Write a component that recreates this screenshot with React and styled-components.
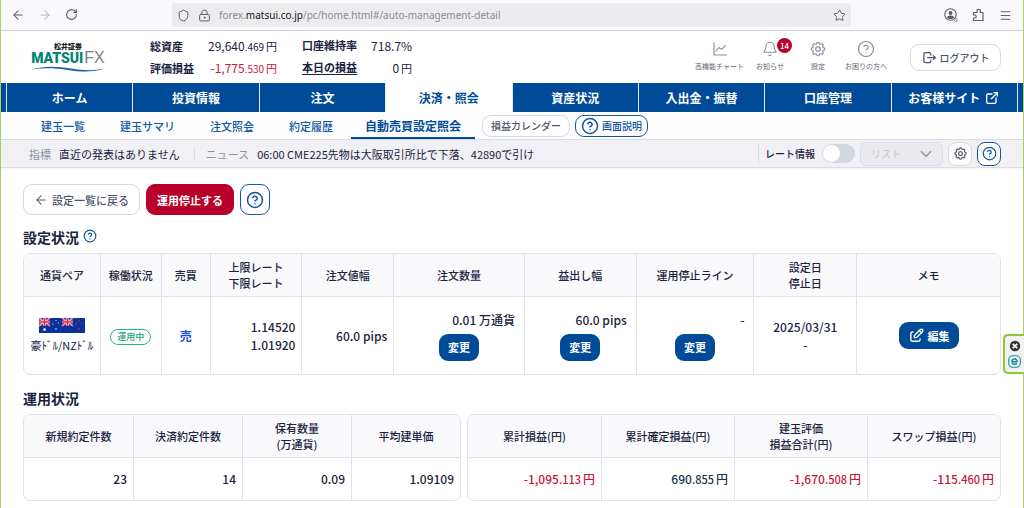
import React, {useState} from 'react';
import styled, {createGlobalStyle} from 'styled-components';
import {
  ArrowLeft,
  ArrowRight,
  Bell,
  ChevronDown,
  CircleQuestionMark,
  LockKeyhole,
  Menu,
  RotateCw,
  Shield,
  Star,
} from 'lucide-react';
import {TbEdit, TbExternalLink, TbLogout, TbSettings} from 'react-icons/tb';

const navItems = ['ホーム', '投資情報', '注文', '決済・照会', '資産状況', '入出金・振替', '口座管理', 'お客様サイト'];
const subItems = ['建玉一覧', '建玉サマリ', '注文照会', '約定履歴', '自動売買設定照会'];

const Yen = ({whole, decimal, tone, small}) => (
  <Money $tone={tone}>
    {whole}
    {decimal && <Decimal $small={small}>.{decimal}</Decimal>}
    <Unit $small={small}>円</Unit>
  </Money>
);

const ChartIcon = () => (
  <svg width="14" height="14" viewBox="0 0 14 14" fill="none" stroke="currentColor" strokeWidth="1.1">
    <path d="M1 0.5v12.500h13" />
    <path d="M2.500 9.500l2.500-3c1-1.200 1.600-.6 2.400.2s1.600.8 2.400-.3l2.700-3" />
  </svg>
);

const PuzzleIcon = () => (
  <svg width="13" height="14" viewBox="0 0 13 14" fill="none" stroke="currentColor" strokeWidth="1.2" strokeLinejoin="round">
    <path d="M1.500 4.500h3.500V3a1.700 1.700 0 0 1 3.400 0v1.500h2.600v8H1.500v-2.500h1.200a1.500 1.500 0 0 0 0-3H1.500z" />
  </svg>
);

const AccountIcon = () => (
  <svg width="14" height="14" viewBox="0 0 14 14" fill="none" stroke="currentColor">
    <circle cx="6.500" cy="6.500" r="5.700" strokeWidth="1.1" />
    <circle cx="6.500" cy="5" r="1.900" fill="currentColor" stroke="none" />
    <path d="M3 9.800c0-3 7-3 7 0-1.800 1.600-5.200 1.600-7 0z" fill="currentColor" stroke="none" />
    <circle cx="11.800" cy="11.800" r="1.600" fill="#f9f9fb" strokeWidth="0.6" />
  </svg>
);

const UnionJack = ({x}) => (
  <g transform={`translate(${x} 0)`}>
    <path d="M0 0l11 8M11 0L0 8" stroke="#fff" strokeWidth="1.500" />
    <path d="M0 0l11 8M11 0L0 8" stroke="#f0304a" strokeWidth="0.8" />
    <path d="M5.500 0v8M0 4h11" stroke="#fff" strokeWidth="2.600" />
    <path d="M5.500 0v8M0 4h11" stroke="#f0203c" strokeWidth="1.600" />
  </g>
);

const Flags = () => (
  <svg width="46" height="15" viewBox="0 0 46 15">
    <rect width="46" height="15" fill="#0a329b" />
    <UnionJack x={0} />
    <UnionJack x={23} />
    <g fill="#fff">
      <circle cx="5.500" cy="11.500" r="1.300" />
      <circle cx="17" cy="2.500" r="0.600" />
      <circle cx="14" cy="6" r="0.600" />
      <circle cx="19.500" cy="5" r="0.600" />
      <circle cx="17" cy="11" r="0.700" />
    </g>
    <g fill="#b52d58">
      <circle cx="40" cy="3" r="0.800" />
      <circle cx="37" cy="6" r="0.800" />
      <circle cx="43" cy="5.500" r="0.800" />
      <circle cx="40" cy="11" r="0.900" />
    </g>
  </svg>
);

const App = () => {
  const [rate, setRate] = useState(false);
  return (
    <Window>
      <GlobalStyle />
      <Browser>
        <BrowserButtons>
          <PlainButton aria-label="戻る"><ArrowLeft size={14} strokeWidth={1.800} /></PlainButton>
          <PlainButton aria-label="進む" disabled><ArrowRight size={14} strokeWidth={1.800} /></PlainButton>
          <PlainButton aria-label="再読み込み"><RotateCw size={13} strokeWidth={2} /></PlainButton>
        </BrowserButtons>
        <Address>
          <Shield size={13} strokeWidth={1.800} />
          <LockKeyhole size={13} strokeWidth={1.800} />
          <Url>forex.<b>matsui.co.jp</b>/pc/home.html#/auto-management-detail</Url>
          <Star size={13} strokeWidth={1.800} />
        </Address>
        <BrowserTools>
          <PlainButton aria-label="アカウント"><AccountIcon /></PlainButton>
          <PlainButton aria-label="拡張機能"><PuzzleIcon /></PlainButton>
          <PlainButton aria-label="メニュー"><Menu size={13} strokeWidth={1.800} /></PlainButton>
        </BrowserTools>
      </Browser>

      <Header>
        <Logo>
          <LogoCompany>松井証券</LogoCompany>
          <LogoName>MATSUI<LogoFx>FX</LogoFx></LogoName>
          <svg width="74" height="6" viewBox="0 0 74 6">
            <path d="M0 3.500C14-.5 26 .5 40 2.600s24 2 34-.1C62 6.500 50 6 37 3.900S12 1.500 0 3.500z" fill="#1f62ab" />
          </svg>
        </Logo>
        <Stats>
          <Stat>
            <StatLabel>総資産</StatLabel>
            <StatValue><Yen small whole="29,640" decimal="469" /></StatValue>
            <StatLabel>評価損益</StatLabel>
            <StatValue><Yen small whole="-1,775" decimal="530" tone="#c8143c" /></StatValue>
          </Stat>
          <Stat>
            <StatLabel>口座維持率</StatLabel>
            <StatValue>718.7%</StatValue>
            <StatLabel><StatLink href="#profit">本日の損益</StatLink></StatLabel>
            <StatValue><Yen small whole="0" /></StatValue>
          </Stat>
        </Stats>
        <Tools>
          <Tool><ChartIcon />高機能チャート</Tool>
          <Tool>
            <Bell size={16} strokeWidth={1.600} />
            お知らせ
            <Badge>14</Badge>
          </Tool>
          <Tool><TbSettings size={18} strokeWidth={1.500} />設定</Tool>
          <Tool><CircleQuestionMark size={18} strokeWidth={1.600} />お困りの方へ</Tool>
        </Tools>
        <Logout><TbLogout size={15} />ログアウト</Logout>
      </Header>

      <Nav>
        <NavEdge />
        {navItems.map((name, i) => (
          <NavLink key={name} href="#nav" $active={i === 3}>
            {name}
            {i === 7 && <TbExternalLink size={16} />}
          </NavLink>
        ))}
        <NavEdge />
      </Nav>

      <SubNav>
        {subItems.map((name, i) => (
          <SubLink key={name} href="#sub" $active={i === 4}>{name}</SubLink>
        ))}
        <PillGroup>
          <Pill>損益カレンダー</Pill>
          <Pill $blue><CircleQuestionMark size={18} />画面説明</Pill>
        </PillGroup>
      </SubNav>

      <Ticker>
        <TickerLabel>指標</TickerLabel>
        <TickerText>直近の発表はありません</TickerText>
        <TickerNews>
          <TickerLabel>ニュース</TickerLabel>
          <TickerText>06:00 CME225先物は大阪取引所比で下落、42890で引け</TickerText>
        </TickerNews>
        <RateLabel>
          レート情報
          <Switch type="checkbox" checked={rate} onChange={() => setRate(!rate)} />
        </RateLabel>
        <SelectBox>
          <Select disabled aria-label="表示形式">
            <option>リスト</option>
          </Select>
          <ChevronDown size={18} />
        </SelectBox>
        <RoundButton aria-label="レート設定"><TbSettings size={15} /></RoundButton>
        <RoundButton aria-label="ヘルプ" $blue><CircleQuestionMark size={15} /></RoundButton>
      </Ticker>

      <Main>
        <Actions>
          <Button><ArrowLeft size={14} strokeWidth={1.800} />設定一覧に戻る</Button>
          <Button $kind="stop">運用停止する</Button>
          <Button $kind="help" aria-label="ヘルプ"><CircleQuestionMark size={18} /></Button>
        </Actions>

        <Title>設定状況<TitleHelp><CircleQuestionMark size={14} /></TitleHelp></Title>
        <Table>
          <colgroup>
            {[76, 61, 49, 92, 92, 131, 112, 118, 103, 144].map((w, i) => (
              <Col key={i} $share={w / 978} />
            ))}
          </colgroup>
          <thead>
            <tr>
              <Th>通貨ペア</Th>
              <Th>稼働状況</Th>
              <Th>売買</Th>
              <Th>上限レート<br />下限レート</Th>
              <Th>注文値幅</Th>
              <Th>注文数量</Th>
              <Th>益出し幅</Th>
              <Th>運用停止ライン</Th>
              <Th>設定日<br />停止日</Th>
              <Th>メモ</Th>
            </tr>
          </thead>
          <tbody>
            <TallRow>
              <Td $align="center">
                <Pair><Flags />豪ﾄﾞﾙ/NZﾄﾞﾙ</Pair>
              </Td>
              <Td $align="center"><Status>運用中</Status></Td>
              <Td $align="center"><Sell>売</Sell></Td>
              <Td>1.14520<br />1.01920</Td>
              <Td>60.0 pips</Td>
              <Td>
                <Editable>0.01 万通貨<SmallButton>変更</SmallButton></Editable>
              </Td>
              <Td>
                <Editable>60.0 pips<SmallButton>変更</SmallButton></Editable>
              </Td>
              <Td>
                <Editable>-<SmallButton>変更</SmallButton></Editable>
              </Td>
              <Td $align="center">2025/03/31<br />-</Td>
              <Td $align="center"><SmallButton><TbEdit size={17} />編集</SmallButton></Td>
            </TallRow>
          </tbody>
        </Table>

        <Title>運用状況</Title>
        <TablePair>
          <Table>
            <thead>
              <tr>
                <Th>新規約定件数</Th>
                <Th>決済約定件数</Th>
                <Th>保有数量<br />(万通貨)</Th>
                <Th>平均建単価</Th>
              </tr>
            </thead>
            <tbody>
              <tr>
                <Td>23</Td>
                <Td>14</Td>
                <Td>0.09</Td>
                <Td>1.09109</Td>
              </tr>
            </tbody>
          </Table>
          <Table>
            <thead>
              <tr>
                <Th>累計損益(円)</Th>
                <Th>累計確定損益(円)</Th>
                <Th>建玉評価<br />損益合計(円)</Th>
                <Th>スワップ損益(円)</Th>
              </tr>
            </thead>
            <tbody>
              <tr>
                <Td><Yen whole="-1,095" decimal="113" tone="#c8143c" /></Td>
                <Td><Yen whole="690" decimal="855" tone="#17344f" /></Td>
                <Td><Yen whole="-1,670" decimal="508" tone="#c8143c" /></Td>
                <Td><Yen whole="-115" decimal="460" tone="#c8143c" /></Td>
              </tr>
            </tbody>
          </Table>
        </TablePair>
      </Main>

      <SideTab>
        <svg width="12" height="12" viewBox="0 0 12 12">
          <circle cx="6" cy="6" r="5.200" fill="#333" />
          <path d="M3.800 3.800l4.400 4.400M8.200 3.800L3.800 8.200" stroke="#fff" strokeWidth="1.800" />
        </svg>
        <svg width="13" height="13" viewBox="0 0 13 13" fill="none" stroke="#16929c">
          <rect x="0.700" y="0.700" width="11.600" height="11.600" rx="4" strokeWidth="1.100" />
          <path d="M4 6.700h5c0-3.800-5-3.600-5 0 0 3 3.600 3.200 4.800 1.500" strokeWidth="1.600" />
        </svg>
      </SideTab>
    </Window>
  );
};

const GlobalStyle = createGlobalStyle`
  * {
    box-sizing: border-box;
  }
  body {
    margin: 0;
    background: white;
    color: #1a2340;
    font-family: 'Noto Sans CJK JP', sans-serif;
    font-size: 11px;
  }
  button, select, input {
    font: inherit;
    color: inherit;
    margin: 0;
  }
  button {
    cursor: pointer;
    white-space: nowrap;
  }
  svg {
    flex-shrink: 0;
  }
`;

const Window = styled.div`
  position: relative;
  min-height: 100vh;
  border: 0 solid #a5d165;
  border-width: 0 1px;
`;

const Browser = styled.div`
  display: flex;
  align-items: center;
  height: 31px;
  padding: 0 11px 0 10px;
  border-bottom: 1px solid #d0d0d6;
  background: #f9f9fb;
  color: #5b5b66;
`;

const BrowserButtons = styled.div`
  display: flex;
  gap: 13px;
  width: 161px;
`;

const PlainButton = styled.button`
  display: flex;
  padding: 0;
  border: 0;
  background: none;

  &:disabled {
    color: #b9b9c0;
  }
`;

const Address = styled.div`
  flex: 1;
  display: flex;
  align-items: center;
  gap: 8px;
  height: 24px;
  padding: 0 5px;
  border-radius: 3px;
  background: #ececee;
`;

const Url = styled.div`
  flex: 1;
  color: #8b8b92;
  font-family: 'Noto Sans', sans-serif;
  font-size: 10px;

  b {
    color: #15141a;
    font-weight: 400;
  }
`;

const BrowserTools = styled.div`
  display: flex;
  align-items: center;
  gap: 14px;
  margin-left: 93px;
`;

const Header = styled.header`
  display: flex;
  align-items: center;
  height: 52px;
  padding: 0 22px 0 30px;
`;

const Logo = styled.div`
  display: flex;
  flex-direction: column;
  align-items: center;
  width: 119px;
  padding-right: 45px;
`;

const LogoCompany = styled.div`
  color: #222;
  font-size: 7px;
  font-weight: 900;
  line-height: 8px;
`;

const LogoName = styled.div`
  display: flex;
  align-items: baseline;
  gap: 1px;
  color: #00856f;
  font-family: Roboto, 'Liberation Sans', sans-serif;
  font-size: 14px;
  font-weight: 900;
  line-height: 16px;
`;

const LogoFx = styled.span`
  color: #7b7f83;
  font-family: 'Liberation Sans', sans-serif;
  font-size: 16px;
  font-weight: 400;
`;

const Stats = styled.div`
  display: flex;
  flex: 1;
  gap: 25px;
`;

const Stat = styled.dl`
  display: grid;
  grid-template-columns: auto auto;
  column-gap: 14px;
  align-items: center;
  margin: 0;
`;

const StatLabel = styled.dt`
  font-weight: 700;
  line-height: 21px;
`;

const StatLink = styled.a`
  color: inherit;
  text-underline-offset: 2px;
`;

const StatValue = styled.dd`
  margin: 0;
  font-size: 12px;
  line-height: 21px;
  text-align: right;
`;

const Money = styled.span`
  color: ${(props) => props.$tone || 'inherit'};
  white-space: nowrap;
`;

const Decimal = styled.span`
  font-size: ${(props) => (props.$small ? '10px' : '11px')};
`;

const Unit = styled.span`
  margin-left: 2px;
  font-size: ${(props) => (props.$small ? '11px' : '12px')};
`;

const Tools = styled.div`
  display: flex;
  gap: 4px;
  margin: 0 22px 3px 0;
`;

const Tool = styled.button`
  position: relative;
  display: grid;
  grid-template-rows: 18px 10px;
  row-gap: 3px;
  place-items: center;
  min-width: 44px;
  padding: 0;
  border: 0;
  background: none;
  color: #5f6778;
  font-size: 7px;
  line-height: 10px;

  svg {
    color: #828c9e;
  }
`;

const Badge = styled.span`
  position: absolute;
  top: -2px;
  left: 29px;
  width: 15px;
  border-radius: 8px;
  background: #b8002a;
  color: white;
  font-size: 8px;
  font-weight: 500;
  line-height: 15px;
`;

const Logout = styled.button`
  display: flex;
  align-items: center;
  justify-content: center;
  gap: 3px;
  width: 91px;
  height: 27px;
  padding: 0;
  border: 1px solid #d5d9e2;
  border-radius: 9px;
  background: white;
  color: #4d5568;
  font-size: 10px;
  font-weight: 500;
`;

const Nav = styled.nav`
  display: flex;
  gap: 1px;
  height: 29px;
  background: #e3e7ef;
`;

const NavEdge = styled.div`
  width: 5px;
  background: #004b97;
`;

const NavLink = styled.a`
  flex: 1;
  display: flex;
  align-items: center;
  justify-content: center;
  gap: 4px;
  background: ${(props) => (props.$active ? 'white' : '#004b97')};
  color: ${(props) => (props.$active ? '#004b97' : 'white')};
  font-size: 12px;
  font-weight: 700;
  text-decoration: none;
  white-space: nowrap;
`;

const SubNav = styled.nav`
  display: flex;
  gap: 1px;
  height: 28px;
  padding-left: 23px;
  border-bottom: 1px solid #d9dce4;
  background: #fdfdfe;
`;

const SubLink = styled.a`
  display: flex;
  align-items: center;
  padding: ${(props) => (props.$active ? '2px 14px 0' : '0 17px')};
  border-bottom: ${(props) => (props.$active ? '2px solid #004b97' : '0')};
  color: ${(props) => (props.$active ? '#004b97' : '#1259a3')};
  font-size: ${(props) => (props.$active ? '12px' : '11px')};
  font-weight: ${(props) => (props.$active ? '700' : '500')};
  text-decoration: none;
  white-space: nowrap;
`;

const PillGroup = styled.div`
  display: flex;
  align-items: center;
  gap: 5px;
  margin-left: 6px;
`;

const Pill = styled.button`
  display: flex;
  align-items: center;
  gap: 3px;
  height: 22px;
  padding: ${(props) => (props.$blue ? '0 5px' : '0 8px')};
  border: 1px solid ${(props) => (props.$blue ? '#1259a3' : '#d5d7e0')};
  border-radius: 9px;
  background: white;
  color: ${(props) => (props.$blue ? '#0f55a0' : '#4d5568')};
  font-size: 10px;
  font-weight: 500;
`;

const Ticker = styled.div`
  display: flex;
  align-items: center;
  height: 28px;
  padding: 0 22px 0 28px;
  border-bottom: 1px solid #dddde3;
  background: #f1f0f5;
  box-shadow: 0 1px 2px rgba(0, 0, 0, 0.06);
`;

const TickerLabel = styled.span`
  margin-right: 8px;
  color: #8b93a3;
`;

const TickerText = styled.span`
  white-space: nowrap;
`;

const TickerNews = styled.div`
  flex: 1;
  margin-left: 14px;
  padding-left: 11px;
  border-left: 1px solid #dadbe2;
  line-height: 12px;
`;

const RateLabel = styled.label`
  display: flex;
  align-items: center;
  gap: 7px;
  margin-right: 5px;
  padding-left: 6px;
  border-left: 1px solid #dadbe2;
  font-size: 10px;
  font-weight: 500;
  line-height: 12px;
`;

const Switch = styled.input`
  display: flex;
  align-items: center;
  width: 33px;
  height: 19px;
  padding: 1px;
  border-radius: 10px;
  background: ${(props) => (props.checked ? '#004b97' : '#d3d7e0')};
  justify-content: ${(props) => (props.checked ? 'flex-end' : 'flex-start')};
  appearance: none;

  &::before {
    content: '';
    width: 17px;
    height: 17px;
    border-radius: 9px;
    background: white;
  }
`;

const SelectBox = styled.div`
  display: grid;
  align-items: center;
  margin-right: 5px;
  font-size: 10px;

  > * {
    grid-area: 1 / 1;
  }
  svg {
    justify-self: end;
    margin-right: 8px;
    color: #8b93a3;
  }
`;

const Select = styled.select`
  width: 83px;
  height: 24px;
  padding: 0 10px;
  border: 1px solid #dcdee5;
  border-radius: 6px;
  background: #ebebef;
  color: #bfc4ce;
  opacity: 1;
  appearance: none;
`;

const RoundButton = styled.button`
  display: flex;
  align-items: center;
  justify-content: center;
  width: 24px;
  height: 24px;
  margin-left: ${(props) => (props.$blue ? '5px' : '0')};
  padding: 0;
  border: 1px solid ${(props) => (props.$blue ? '#1259a3' : '#d5d7e0')};
  border-radius: 8px;
  background: white;
  color: ${(props) => (props.$blue ? '#0f55a0' : '#5a6275')};
`;

const Main = styled.main`
  padding: 16px 22px 0;
`;

const Actions = styled.div`
  display: flex;
  gap: 6px;
  margin-bottom: 11px;
`;

const buttonKinds = {
  back: 'border-color: #d5d7e0; background: white; color: #4d5568;',
  stop: 'border-color: #b8002a; background: #b8002a; color: white; font-weight: 700;',
  help: 'padding: 0 5px; border-color: #1259a3; background: white; color: #0f55a0;',
};

const Button = styled.button`
  display: flex;
  align-items: center;
  gap: 4px;
  height: 31px;
  padding: 0 10px;
  border: 1px solid;
  border-radius: 9px;
  font-weight: 500;
  ${(props) => buttonKinds[props.$kind || 'back']}
`;

const Title = styled.h2`
  display: flex;
  align-items: center;
  gap: 4px;
  margin: 0 0 5px;
  font-size: 14px;
  font-weight: 700;
  line-height: 22px;
`;

const TitleHelp = styled.span`
  display: flex;
  padding-bottom: 2px;
  color: #0f55a0;
`;

const Table = styled.table`
  width: 100%;
  margin-bottom: 12px;
  border: 1px solid #dfe2ea;
  border-radius: 7px;
  border-spacing: 0;
  table-layout: fixed;
  overflow: hidden;
`;

const Col = styled.col`
  width: ${(props) => props.$share * 100}%;
`;

const Th = styled.th`
  height: 43px;
  padding: 0;
  border-bottom: 1px solid #dfe2ea;
  background: #f9f9fc;
  font-size: 11px;
  font-weight: 500;
  line-height: 16px;
  white-space: nowrap;

  & + & {
    border-left: 1px solid #dfe2ea;
  }
`;

const Td = styled.td`
  height: 42px;
  padding: ${(props) => (props.$align ? '0' : '0 6px')};
  font-size: 12px;
  font-weight: 500;
  line-height: 18px;
  text-align: ${(props) => props.$align || 'right'};
  white-space: nowrap;

  & + & {
    border-left: 1px solid #dfe2ea;
  }
`;

const TallRow = styled.tr`
  height: 77px;
`;

const Pair = styled.div`
  display: flex;
  flex-direction: column;
  align-items: center;
  gap: 3px;
  font-size: 11px;
  font-weight: 400;
`;

const Status = styled.span`
  display: inline-block;
  padding: 0 6px;
  border: 1px solid #2bb583;
  border-radius: 8px;
  color: #16a873;
  font-size: 9px;
  line-height: 14px;
  vertical-align: middle;
`;

const Sell = styled.span`
  color: #1f48dc;
  font-weight: 700;
`;

const Editable = styled.div`
  display: grid;
  gap: 5px;
  padding: 0 3px;

  button {
    justify-self: center;
  }
`;

const SmallButton = styled.button`
  display: inline-flex;
  align-items: center;
  gap: 3px;
  height: 27px;
  padding: 0 9px;
  border: 0;
  border-radius: 9px;
  background: #004b97;
  color: white;
  font-size: 11px;
  font-weight: 700;
  vertical-align: middle;
`;

const TablePair = styled.div`
  display: grid;
  grid-template-columns: 438fr 534fr;
  gap: 6px;

  table {
    margin-bottom: 0;
  }
`;

const SideTab = styled.aside`
  position: absolute;
  top: 334px;
  right: -1px;
  display: flex;
  flex-direction: column;
  align-items: center;
  gap: 3px;
  width: 21px;
  padding: 4px 0;
  border: 2px solid #8cc63f;
  border-right: 0;
  border-radius: 5px 0 0 5px;
  background: #f1f1f1;
`;

export default App;
